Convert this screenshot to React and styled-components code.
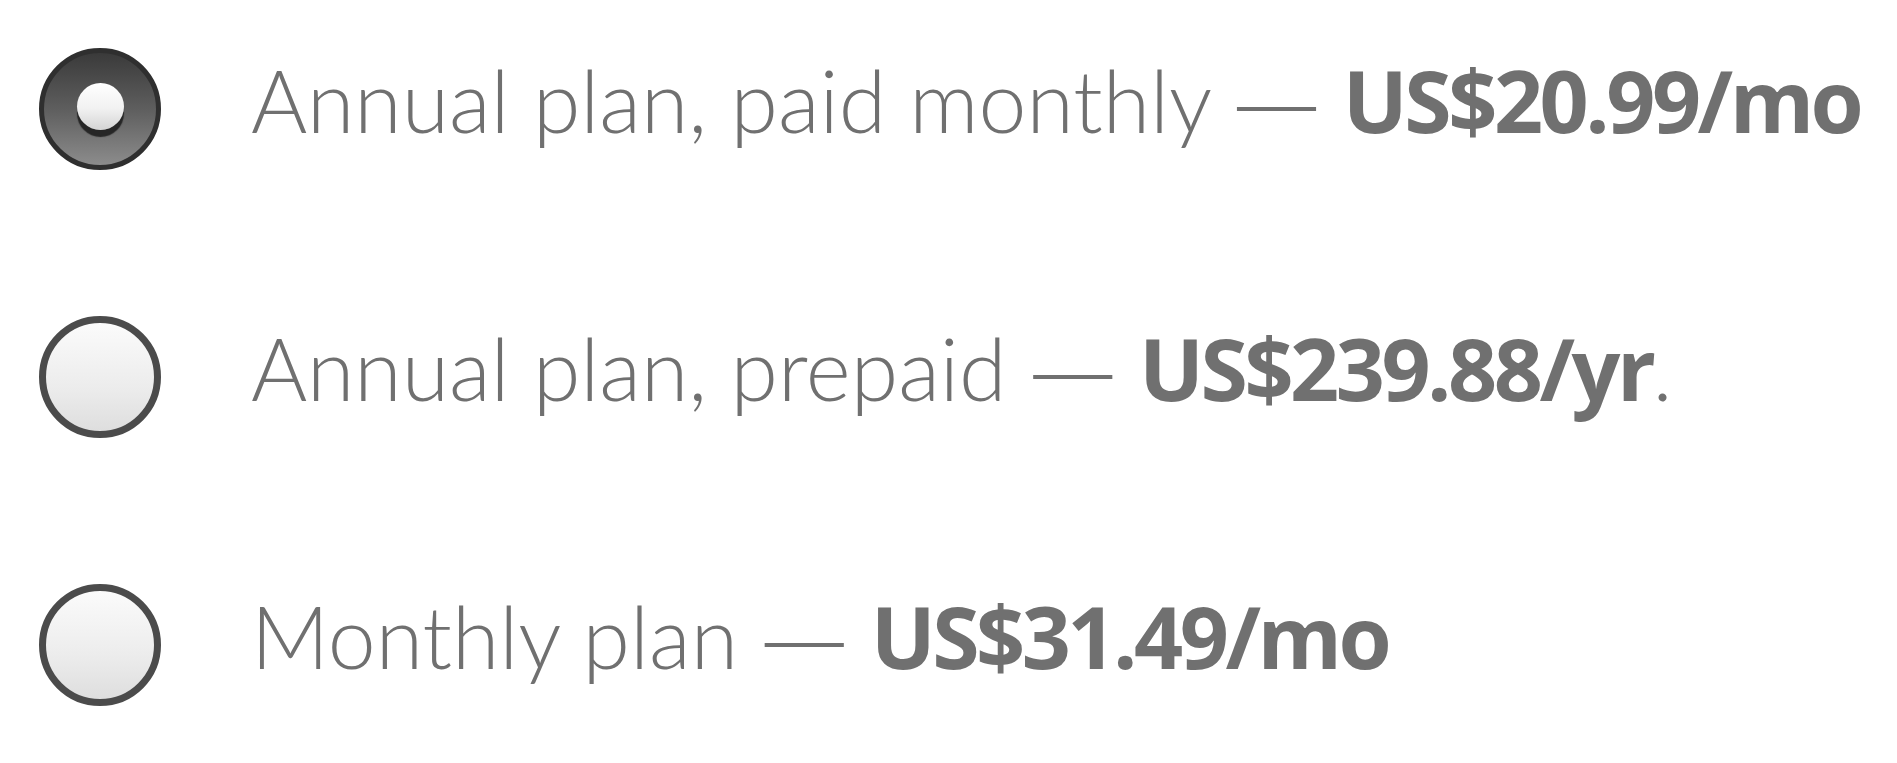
import styled, { createGlobalStyle } from "styled-components";

const GlobalStyle = createGlobalStyle`
  html, body {
    margin: 0;
    padding: 0;
    background: #ffffff;
  }
`;

const plans = [
  { id: "annual-monthly", label: "Annual plan, paid monthly", price: "US$20.99/mo", checked: true },
  { id: "annual-prepaid", label: "Annual plan, prepaid", price: "US$239.88/yr", suffix: ".", checked: false },
  { id: "monthly", label: "Monthly plan", price: "US$31.49/mo", checked: false },
];

const App = () => {
  return (
    <>
      <GlobalStyle />
      <List>
        {plans.map((plan) => (
          <Row key={plan.id}>
            <Radio $checked={plan.checked}>{plan.checked && <Dot />}</Radio>
            <Label>
              {plan.label} <Dash>—</Dash> <Price>{plan.price}</Price>
              {plan.suffix}
            </Label>
          </Row>
        ))}
      </List>
    </>
  );
};

export default App;

const List = styled.div`
  display: flex;
  flex-direction: column;
  gap: 146px;
  padding: 48px 0 0 39px;
`;

const Row = styled.div`
  display: flex;
  align-items: center;
  gap: 90px;
  height: 122px;
`;

const Radio = styled.div`
  flex: none;
  box-sizing: border-box;
  width: 122px;
  height: 122px;
  border-radius: 50%;
  display: flex;
  align-items: center;
  justify-content: center;
  border: ${(p) => (p.$checked ? "5px solid #2f2f2f" : "7px solid #4b4b4b")};
  background: ${(p) =>
    p.$checked
      ? "linear-gradient(180deg, #3a3a3a 0%, #5e5e5e 50%, #8c8c8c 100%)"
      : "linear-gradient(180deg, #fbfbfb 0%, #ececec 60%, #dedede 100%)"};
`;

const Dot = styled.span`
  width: 47px;
  height: 47px;
  border-radius: 50%;
  background: linear-gradient(180deg, #ffffff 0%, #f1f1f1 55%, #d4d4d4 100%);
  box-shadow: 0 7px 1px #262626;
  transform: translateY(-3px);
`;

const Label = styled.div`
  font-family: "Lato", "Open Sans", sans-serif;
  font-weight: 300;
  font-size: 86px;
  line-height: 1;
  color: #707070;
  white-space: nowrap;
  margin-bottom: 18px;
`;

const Dash = styled.span`
  font-family: "Open Sans", sans-serif;
  font-weight: 300;
`;

const Price = styled.span`
  font-family: "Open Sans", "Noto Sans", sans-serif;
  font-weight: 700;
  letter-spacing: -3.5px;
`;
